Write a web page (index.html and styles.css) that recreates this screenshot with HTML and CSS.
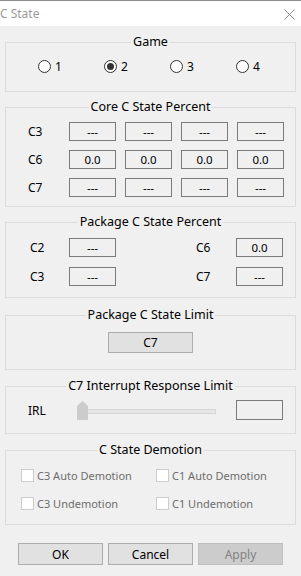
FILE: index.html
```html
<!DOCTYPE html>
<html lang="en">
<head>
    <meta charset="UTF-8">
    <title>C State</title>
    <link rel="stylesheet" href="styles.css">
</head>
<body>
    <div class="titlebar">
        <span class="title">C State</span>
        <svg class="close" width="11" height="11" viewBox="0 0 11 11">
            <path d="M0.5 0.5 L10.5 10.5 M10.5 0.5 L0.5 10.5" stroke="#8a8a8a" stroke-width="1" fill="none"/>
        </svg>
    </div>

    <div class="dialog">
        <fieldset class="group game">
            <legend>Game</legend>
            <div class="radios">
                <label class="radio"><span class="dot"></span>1</label>
                <label class="radio checked"><span class="dot"></span>2</label>
                <label class="radio"><span class="dot"></span>3</label>
                <label class="radio"><span class="dot"></span>4</label>
            </div>
        </fieldset>

        <fieldset class="group core">
            <legend>Core C State Percent</legend>
            <div class="core-grid">
                <span class="lbl">C3</span>
                <span class="box">---</span><span class="box">---</span><span class="box">---</span><span class="box">---</span>
                <span class="lbl">C6</span>
                <span class="box">0.0</span><span class="box">0.0</span><span class="box">0.0</span><span class="box">0.0</span>
                <span class="lbl">C7</span>
                <span class="box">---</span><span class="box">---</span><span class="box">---</span><span class="box">---</span>
            </div>
        </fieldset>

        <fieldset class="group package">
            <legend>Package C State Percent</legend>
            <div class="pkg-grid">
                <span class="lbl">C2</span><span class="box">---</span>
                <span></span>
                <span class="lbl">C6</span><span class="box">0.0</span>
                <span class="lbl">C3</span><span class="box">---</span>
                <span></span>
                <span class="lbl">C7</span><span class="box">---</span>
            </div>
        </fieldset>

        <fieldset class="group limit">
            <legend>Package C State Limit</legend>
            <button class="btn combo">C7</button>
        </fieldset>

        <fieldset class="group irl">
            <legend>C7 Interrupt Response Limit</legend>
            <div class="irl-row">
                <span class="lbl">IRL</span>
                <div class="slider">
                    <div class="track"></div>
                    <svg class="thumb" width="11" height="19" viewBox="0 0 11 19">
                        <path d="M0 5 L5.5 0 L11 5 L11 19 L0 19 Z" fill="#cccccc"/>
                    </svg>
                </div>
                <span class="box empty"></span>
            </div>
        </fieldset>

        <fieldset class="group demotion">
            <legend>C State Demotion</legend>
            <div class="checks">
                <label class="check"><span class="cb"></span>C3 Auto Demotion</label>
                <label class="check"><span class="cb"></span>C1 Auto Demotion</label>
                <label class="check"><span class="cb"></span>C3 Undemotion</label>
                <label class="check"><span class="cb"></span>C1 Undemotion</label>
            </div>
        </fieldset>

        <div class="buttons">
            <button class="btn">OK</button>
            <button class="btn">Cancel</button>
            <button class="btn disabled">Apply</button>
        </div>
    </div>
</body>
</html>
```

FILE: styles.css
```css
body {
    margin: 0;
    font-family: 'Noto Sans', 'Open Sans', sans-serif;
    font-size: 11px;
    color: #000;
    background: #f0f0f0;
    width: 301px;
    height: 576px;
    overflow: hidden;
}
.titlebar {
    height: 25px;
    border-top: 1px solid #8c8c8c;
    background: #fff;
    display: flex;
    align-items: center;
    justify-content: space-between;
    padding: 0 6px 0 0;
}
.title {
    font-size: 12px;
    color: #9a9a9a;
    line-height: 16px;
}
.close {
    margin-top: 1px;
}
.dialog {
    padding: 8px 5px 0 5px;
}
.group {
    margin: 0 0 7px 0;
    padding: 0;
    border: 1px solid #dcdcdc;
    min-width: 0;
}
.group legend {
    margin: 0 auto;
    padding: 0 2px;
    font-size: 12.5px;
    line-height: 16px;
}
.radios {
    display: grid;
    grid-template-columns: repeat(4, 66px);
    padding: 8px 0 17px 32px;
}
.radio {
    display: flex;
    align-items: center;
    height: 16px;
    font-size: 12px;
}
.dot {
    width: 11px;
    height: 11px;
    border: 1px solid #333;
    border-radius: 50%;
    background: #fff;
    margin-right: 4px;
    display: flex;
    align-items: center;
    justify-content: center;
}
.radio.checked .dot::after {
    content: "";
    width: 7px;
    height: 7px;
    border-radius: 50%;
    background: #333;
}
.lbl {
    font-size: 12px;
    line-height: 19px;
}
.box {
    height: 17px;
    border: 1px solid #7a7a7a;
    background: #f0f0f0;
    text-align: center;
    line-height: 17px;
    font-size: 11.5px;
}
.core-grid {
    display: grid;
    grid-template-columns: 32px repeat(4, 47px);
    column-gap: 9px;
    row-gap: 9px;
    padding: 7px 0 9px 22px;
}
.package {
    margin-bottom: 9px;
}
.pkg-grid {
    display: grid;
    grid-template-columns: 39px 47px 80px 40px 47px;
    row-gap: 10px;
    padding: 8px 0 11px 24px;
}
.limit {
    text-align: center;
    margin-bottom: 8px;
}
.btn {
    width: 85px;
    height: 22px;
    border: 1px solid #adadad;
    background: #e1e1e1;
    font-family: 'Noto Sans', 'Open Sans', sans-serif;
    font-size: 12px;
    color: #000;
    padding: 0;
}
.combo {
    margin: 9px 0 16px 0;
    height: 21px;
}
.irl {
    margin-bottom: 8px;
}
.irl-row {
    display: flex;
    align-items: center;
    padding: 6px 0 13px 22px;
}
.irl-row .lbl {
    width: 49px;
}
.slider {
    position: relative;
    width: 139px;
    height: 19px;
}
.track {
    position: absolute;
    left: 0;
    right: 0;
    top: 8px;
    height: 3px;
    background: #e7e7e7;
    border: 1px solid #d6d6d6;
}
.thumb {
    position: absolute;
    left: 0;
    top: 0;
}
.box.empty {
    width: 45px;
    margin-left: 20px;
    height: 18px;
}
.checks {
    display: grid;
    grid-template-columns: 135px 135px;
    row-gap: 12px;
    padding: 9px 0 13px 15px;
}
.check {
    display: flex;
    align-items: center;
    height: 16px;
    font-size: 11px;
    color: #6d6d6d;
}
.cb {
    width: 11px;
    height: 11px;
    border: 1px solid #cccccc;
    background: #fff;
    margin-right: 3px;
}
.buttons {
    display: flex;
    gap: 5px;
    padding: 11px 0 0 13px;
}
.btn.disabled {
    background: #cccccc;
    border-color: #bfbfbf;
    color: #838383;
}
```
